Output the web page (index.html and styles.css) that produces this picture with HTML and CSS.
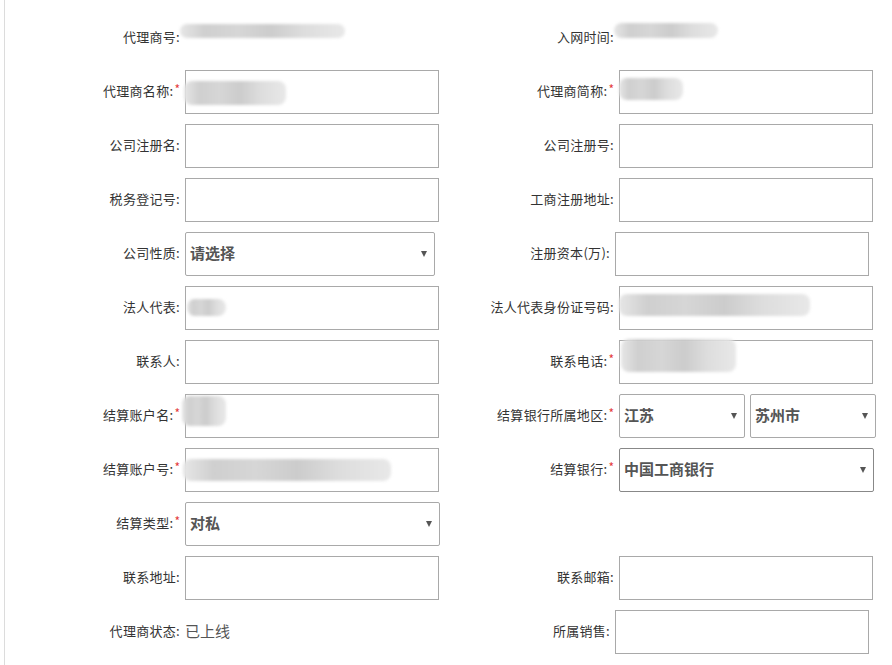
FILE: index.html
```html
<!DOCTYPE html>
<html lang="zh-CN">
<head>
<meta charset="utf-8">
<title>代理商信息</title>
<link rel="stylesheet" href="styles.css">
</head>
<body>
<div class="page">
  <div class="form">
    <div class="row">
      <div class="field"><label class="lbl">代理商号:</label><div class="text"><span class="blob" style="left:-5px;top:-7px;width:165px;height:14px"></span></div></div>
      <div class="field"><label class="lbl">入网时间:</label><div class="text"><span class="blob" style="left:-5px;top:-8px;width:104px;height:15px"></span></div></div>
    </div>
    <div class="row">
      <div class="field"><label class="lbl">代理商名称:<i class="req">*</i></label><div class="box"><span class="blob" style="left:-2px;top:10px;width:102px;height:24px"></span></div></div>
      <div class="field"><label class="lbl">代理商简称:<i class="req">*</i></label><div class="box"><span class="blob" style="left:-1px;top:7px;width:64px;height:22px"></span></div></div>
    </div>
    <div class="row">
      <div class="field"><label class="lbl">公司注册名:</label><div class="box"></div></div>
      <div class="field"><label class="lbl">公司注册号:</label><div class="box"></div></div>
    </div>
    <div class="row">
      <div class="field"><label class="lbl">税务登记号:</label><div class="box"></div></div>
      <div class="field"><label class="lbl">工商注册地址:</label><div class="box"></div></div>
    </div>
    <div class="row">
      <div class="field"><label class="lbl">公司性质:</label><div class="select w250">请选择</div></div>
      <div class="field"><label class="lbl narrow">注册资本(万):</label><div class="box"></div></div>
    </div>
    <div class="row">
      <div class="field"><label class="lbl">法人代表:</label><div class="box"><span class="blob" style="left:1px;top:12px;width:39px;height:17px"></span></div></div>
      <div class="field"><label class="lbl">法人代表身份证号码:</label><div class="box"><span class="blob" style="left:-1px;top:7px;width:191px;height:22px"></span></div></div>
    </div>
    <div class="row">
      <div class="field"><label class="lbl">联系人:</label><div class="box"></div></div>
      <div class="field"><label class="lbl">联系电话:<i class="req">*</i></label><div class="box"><span class="blob" style="left:1px;top:-2px;width:115px;height:33px"></span></div></div>
    </div>
    <div class="row">
      <div class="field"><label class="lbl">结算账户名:<i class="req">*</i></label><div class="box"><span class="blob" style="left:-4px;top:1px;width:44px;height:30px"></span></div></div>
      <div class="field"><label class="lbl">结算银行所属地区:<i class="req">*</i></label><div class="select w126">江苏</div><div class="select w126 gap6">苏州市</div></div>
    </div>
    <div class="row">
      <div class="field"><label class="lbl">结算账户号:<i class="req">*</i></label><div class="box"><span class="blob" style="left:-3px;top:10px;width:208px;height:22px"></span></div></div>
      <div class="field"><label class="lbl">结算银行:<i class="req">*</i></label><div class="select w255 dark">中国工商银行</div></div>
    </div>
    <div class="row">
      <div class="field"><label class="lbl">结算类型:<i class="req">*</i></label><div class="select w255">对私</div></div>
      <div class="field"></div>
    </div>
    <div class="row">
      <div class="field"><label class="lbl">联系地址:</label><div class="box"></div></div>
      <div class="field"><label class="lbl">联系邮箱:</label><div class="box"></div></div>
    </div>
    <div class="row">
      <div class="field"><label class="lbl">代理商状态:</label><div class="status">已上线</div></div>
      <div class="field"><label class="lbl narrow">所属销售:</label><div class="box"></div></div>
    </div>
  </div>
</div>
</body>
</html>
```

FILE: styles.css
```css
* { box-sizing: border-box; }
html, body { margin: 0; padding: 0; background: #fff; }
body {
  font-family: "Noto Sans CJK SC", "Liberation Sans", sans-serif;
  font-size: 12px;
  color: #333;
}
.page {
  margin-left: 4px;
  border-left: 1px solid #dcdcdc;
  height: 665px;
  padding-top: 11px;
}
.form {
  display: flex;
  flex-direction: column;
}
.row {
  display: grid;
  grid-template-columns: 434px 434px;
  height: 54px;
}
.field {
  display: flex;
  align-items: center;
}
.lbl {
  flex-shrink: 0;
  width: 175px;
  margin-right: 5px;
  text-align: right;
  white-space: nowrap;
  font-size: 13px;
  line-height: 13px;
  letter-spacing: 0.3px;
  color: #333;
  position: relative;
  top: -2px;
}
.lbl.narrow { width: 171px; }
.req {
  font-style: normal;
  color: #e4393c;
  font-size: 12px;
  position: relative;
  top: -2px;
  margin-left: 1px;
  letter-spacing: 0;
}
.text {
  position: relative;
  height: 14px;
  width: 200px;
}
.box {
  flex-shrink: 0;
  position: relative;
  width: 254px;
  height: 44px;
  border: 1px solid #a9a9a9;
  background: #fff;
}
.select {
  flex-shrink: 0;
  position: relative;
  height: 44px;
  border: 1px solid #a9a9a9;
  border-radius: 2px;
  background: #fff;
  padding-left: 4px;
  padding-bottom: 4px;
  display: flex;
  align-items: center;
  font-size: 15px;
  font-weight: bold;
  color: #555;
}
.select::after {
  content: "";
  position: absolute;
  right: 7px;
  top: 18px;
  border-left: 3px solid transparent;
  border-right: 3px solid transparent;
  border-top: 6px solid #555;
}
.select.dark { border-color: #888; }
.w250 { width: 250px; }
.w255 { width: 255px; }
.w126 { width: 126px; }
.gap6 { margin-left: 5px; }
.status {
  font-size: 15px;
  color: #555;
  position: relative;
  top: -2px;
}
.blob {
  position: absolute;
  display: block;
  border-radius: 8px;
  background: linear-gradient(90deg, #e6e6e6 0%, #cfcfcf 15%, #d6d6d6 35%, #cccccc 55%, #dddddd 75%, #e8e8e8 100%);
  filter: blur(1.5px);
}
```
